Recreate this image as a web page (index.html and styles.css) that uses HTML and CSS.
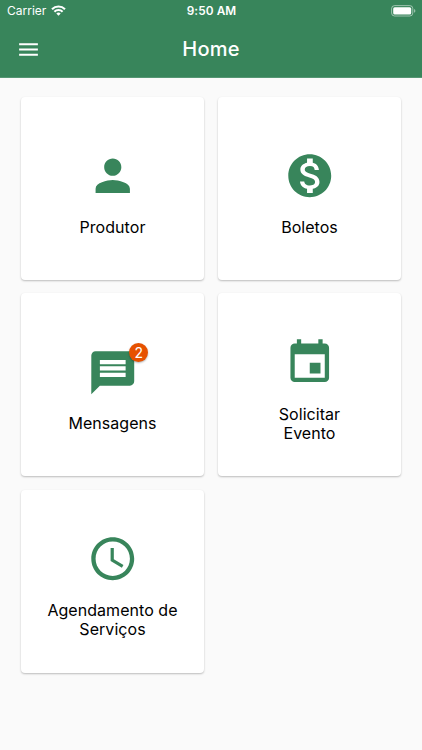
FILE: index.html
```html
<!DOCTYPE html>
<html lang="pt-BR">
<head>
    <meta charset="UTF-8">
    <meta name="viewport" content="width=device-width, initial-scale=1.0">
    <title>Home</title>
    <link rel="stylesheet" href="styles.css">
</head>
<body>
    <header class="header">
        <div class="status-bar">
            <div class="carrier">
                <span>Carrier</span>
                <svg class="wifi" viewBox="0 0 15 11">
                    <path d="M7.5 10.8 5.3 8.6a3.1 3.1 0 0 1 4.4 0z" fill="#fff"/>
                    <path d="M3.4 6.7a5.8 5.8 0 0 1 8.2 0M1 4.2a9.2 9.2 0 0 1 13 0" fill="none" stroke="#fff" stroke-width="2.1"/>
                </svg>
            </div>
            <span class="time">9:50 AM</span>
            <svg class="battery" viewBox="0 0 25 12">
                <rect x=".6" y=".6" width="21.2" height="10.4" rx="3" fill="none" stroke="#fff" stroke-opacity=".5"/>
                <rect x="2.2" y="2.2" width="18" height="7.2" rx="1.5" fill="#fff"/>
                <path d="M23.2 4v3.8c1.5-.6 1.5-3.2 0-3.8z" fill="#fff" fill-opacity=".6"/>
            </svg>
        </div>
        <div class="nav-bar">
            <button class="menu-btn" aria-label="Menu">
                <svg viewBox="0 0 24 24"><path d="M3 18h18v-2H3v2zm0-5h18v-2H3v2zm0-7v2h18V6H3z"/></svg>
            </button>
            <h1>Home</h1>
        </div>
    </header>

    <main class="grid">
        <a class="card">
            <div class="icon">
                <svg viewBox="0 0 24 24"><path d="M12 12c2.21 0 4-1.79 4-4s-1.79-4-4-4-4 1.79-4 4 1.79 4 4 4zm0 2c-2.67 0-8 1.34-8 4v2h16v-2c0-2.66-5.33-4-8-4z"/></svg>
            </div>
            <span class="label">Produtor</span>
        </a>
        <a class="card">
            <div class="icon">
                <svg viewBox="0 0 24 24"><path d="M12 2C6.48 2 2 6.48 2 12s4.48 10 10 10 10-4.48 10-10S17.52 2 12 2zm1.41 16.09V20h-2.67v-1.93c-1.71-.36-3.16-1.46-3.27-3.4h1.96c.1 1.05.82 1.87 2.65 1.87 1.96 0 2.4-.98 2.4-1.59 0-.83-.44-1.61-2.67-2.14-2.48-.6-4.18-1.62-4.18-3.67 0-1.72 1.39-2.84 3.11-3.21V4h2.67v1.95c1.86.45 2.79 1.86 2.85 3.39H14.3c-.05-1.11-.64-1.87-2.22-1.87-1.5 0-2.4.68-2.4 1.64 0 .84.65 1.39 2.67 1.91s4.18 1.39 4.18 3.91c-.01 1.83-1.38 2.83-3.12 3.16z"/></svg>
            </div>
            <span class="label">Boletos</span>
        </a>
        <a class="card">
            <div class="icon">
                <svg viewBox="0 0 24 24"><path d="M20 2H4c-1.1 0-1.99.9-1.99 2L2 22l4-4h14c1.1 0 2-.9 2-2V4c0-1.1-.9-2-2-2zm-2 12H6v-2h12v2zm0-3H6V9h12v2zm0-3H6V6h12v2z"/></svg>
                <span class="badge">2</span>
            </div>
            <span class="label">Mensagens</span>
        </a>
        <a class="card">
            <div class="icon">
                <svg viewBox="0 0 24 24"><path d="M17 12h-5v5h5v-5zM16 1v2H8V1H6v2H5c-1.11 0-1.99.9-1.99 2L3 19c0 1.1.89 2 2 2h14c1.1 0 2-.9 2-2V5c0-1.1-.9-2-2-2h-1V1h-2zm3 18H5V8h14v11z"/></svg>
            </div>
            <span class="label">Solicitar<br>Evento</span>
        </a>
        <a class="card">
            <div class="icon">
                <svg viewBox="0 0 24 24"><path d="M11.99 2C6.47 2 2 6.48 2 12s4.47 10 9.99 10C17.52 22 22 17.52 22 12S17.52 2 11.99 2zM12 20c-4.42 0-8-3.58-8-8s3.58-8 8-8 8 3.58 8 8-3.58 8-8 8zm.5-13H11v6l5.25 3.15.75-1.23-4.5-2.67z"/></svg>
            </div>
            <span class="label">Agendamento de<br>Serviços</span>
        </a>
    </main>
</body>
</html>
```
FILE: styles.css
```css
* { box-sizing: border-box; }
body { font-family: Inter, "Liberation Sans", sans-serif; background-color: #fafafa; margin: 0; color: #111; }
.header { height: 78px; background: #38855b; color: #fff; border-bottom: 1px solid #559673; }
.status-bar { display: grid; grid-template-columns: 1fr auto 1fr; align-items: center; height: 21px; padding: 0 6px 0 7px; font-size: 12px; }
.carrier { display: flex; align-items: center; gap: 5px; }
.wifi { width: 15px; height: 11px; }
.time { font-weight: 600; font-size: 11.8px; letter-spacing: 0.1px; }
.battery { width: 25px; height: 12px; justify-self: end; }
.nav-bar { display: grid; grid-template-columns: 1fr auto 1fr; align-items: center; height: 56px; padding: 0 16px; }
.menu-btn { width: 25px; height: 25px; padding: 0; border: none; background: none; cursor: pointer; }
.menu-btn svg { display: block; width: 25px; height: 25px; fill: #fff; }
h1 { margin: 0; font-size: 20px; font-weight: 500; letter-spacing: 0.2px; }
.grid { display: grid; grid-template-columns: 183px 183px; grid-auto-rows: 183px; gap: 13.3px 14px; padding: 19px 21px; }
.card { display: flex; flex-direction: column; align-items: center; justify-content: center; padding-top: 11px; background: #fff; border-radius: 4px; box-shadow: 0 1px 2px rgba(0, 0, 0, 0.25); }
.icon { position: relative; width: 51.5px; height: 51.5px; }
.icon svg { display: block; width: 100%; height: 100%; fill: #38855b; }
.badge { position: absolute; top: -4px; right: -10px; width: 19px; height: 19px; border-radius: 50%; background: #e65100; color: #fff; font-size: 14px; line-height: 19px; text-align: center; box-shadow: 0 1px 2px rgba(0, 0, 0, 0.3); }
.label { margin-top: 16.2px; font-size: 16px; line-height: 19.5px; letter-spacing: 0.05px; text-align: center; color: #000; }
```
